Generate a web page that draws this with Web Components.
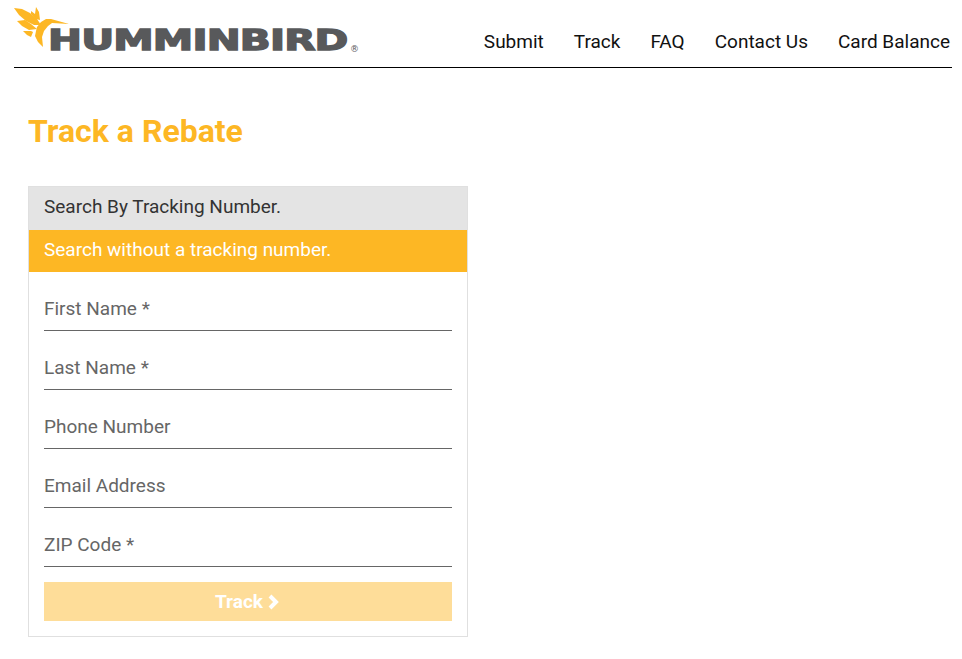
<!DOCTYPE html>
<html lang="en">
<head>
<meta charset="utf-8">
<title>Track a Rebate</title>
<style>
  html, body { margin: 0; background: #fff; }
  body { font-family: Roboto, "Liberation Sans", sans-serif; }
</style>
</head>
<body>
<hb-page>
  <hb-header slot="header">
    <hb-nav-link>Submit</hb-nav-link>
    <hb-nav-link>Track</hb-nav-link>
    <hb-nav-link>FAQ</hb-nav-link>
    <hb-nav-link>Contact Us</hb-nav-link>
    <hb-nav-link>Card Balance</hb-nav-link>
  </hb-header>
  <hb-card heading="Track a Rebate">
    <hb-tab slot="tabs">Search By Tracking Number.</hb-tab>
    <hb-tab slot="tabs" active>Search without a tracking number.</hb-tab>
    <hb-field>First Name *</hb-field>
    <hb-field>Last Name *</hb-field>
    <hb-field>Phone Number</hb-field>
    <hb-field>Email Address</hb-field>
    <hb-field>ZIP Code *</hb-field>
    <hb-button slot="footer">Track</hb-button>
  </hb-card>
</hb-page>

<script>
function shadow(el, html) {
  el.attachShadow({ mode: "open" }).innerHTML = html
}

class HbPage extends HTMLElement {
  constructor() {
    super()
    shadow(this, `
      <style>
        :host { display: block; }
        main { padding: 0 28px; }
      </style>
      <slot name="header"></slot>
      <main><slot></slot></main>
    `)
  }
}

class HbLogo extends HTMLElement {
  constructor() {
    super()
    shadow(this, `
      <style>
        :host {
          display: block;
          position: relative;
          width: 311px;
          height: 29px;
          padding-left: 34px;
          color: #58595b;
        }
        svg { position: absolute; left: 0; top: -22px; }
        .word {
          display: inline-block;
          font: 700 29px/29px "DejaVu Sans", sans-serif;
          letter-spacing: -0.6px;
          -webkit-text-stroke: 1.4px #58595b;
          transform: scaleX(1.4);
          transform-origin: left center;
          white-space: nowrap;
        }
        .mark {
          position: absolute;
          left: 336px;
          top: 18px;
          font: 9px/10px "DejaVu Sans", sans-serif;
        }
      </style>
      <svg width="56" height="44" viewBox="14 4 56 44" aria-hidden="true">
        <g fill="#fdb724">
          <path d="M14 8 L22 9 L30 13 L37 19 L41 25 L34 25 L26 21 L19 15 Z"/>
          <path d="M17 21 L25 20 L31 24 L37 29 L29 30 L22 26 Z"/>
          <path d="M23 31 L31 31 L33 32 L31 37 L27 35 Z"/>
          <path d="M36 7 L39 12 L40 20 L36 19 L31 14 L31 11 L35 14 Z"/>
          <path d="M36 31 L37 27 L41 22 L46 19 L51 19 L69 24 L52 23 L48 26 L44 31 L42 37 L43 47 L38 42 L35 36 Z"/>
        </g>
      </svg>
      <span class="word">HUMMINBIRD</span>
      <span class="mark">®</span>
    `)
  }
}

class HbHeader extends HTMLElement {
  constructor() {
    super()
    shadow(this, `
      <style>
        :host {
          display: flex;
          justify-content: space-between;
          align-items: flex-end;
          height: 67px;
          margin: 0 10px 0 14px;
          border-bottom: 1px solid #000;
        }
        hb-logo { margin-bottom: 12px; }
        nav { display: flex; gap: 30px; padding-right: 2px; margin-bottom: 14px; }
      </style>
      <hb-logo></hb-logo>
      <nav><slot></slot></nav>
    `)
  }
}

class HbNavLink extends HTMLElement {
  constructor() {
    super()
    shadow(this, `
      <style>
        :host { display: block; font-size: 19px; line-height: 22px; color: #111; cursor: pointer; }
      </style>
      <slot></slot>
    `)
  }
}

class HbCard extends HTMLElement {
  constructor() {
    super()
    shadow(this, `
      <style>
        :host { display: block; }
        h1 {
          margin: 0;
          padding: 45px 0 36px;
          font-size: 32px;
          line-height: 37px;
          font-weight: 700;
          color: #fdb724;
        }
        .box { width: 438px; border: 1px solid #e0e0e0; }
        .fields { display: flex; flex-direction: column; padding: 0 15px; }
        .footer { padding: 15px; }
      </style>
      <h1></h1>
      <div class="box">
        <slot name="tabs"></slot>
        <div class="fields"><slot></slot></div>
        <div class="footer"><slot name="footer"></slot></div>
      </div>
    `)
    this.shadowRoot.querySelector("h1").textContent = this.getAttribute("heading")
  }
}

class HbTab extends HTMLElement {
  constructor() {
    super()
    shadow(this, `
      <style>
        :host {
          display: block;
          padding: 9px 15px 12px;
          font-size: 19px;
          line-height: 22px;
          background: #e4e4e4;
          color: #333;
          cursor: pointer;
        }
        :host([active]) { background: #fdb724; color: #fff; padding-bottom: 11px; }
      </style>
      <slot></slot>
    `)
  }
}

class HbField extends HTMLElement {
  constructor() {
    super()
    shadow(this, `
      <style>
        :host { display: block; padding-top: 17px; }
        label {
          display: grid;
          height: 41px;
          border-bottom: 1px solid #666;
          font-size: 19px;
          color: #666;
        }
        span, input { grid-area: 1 / 1; }
        span { line-height: 40px; }
        input { border: 0; outline: 0; padding: 0; background: none; font: inherit; }
      </style>
      <label><span><slot></slot></span><input type="text"></label>
    `)
  }
}

class HbButton extends HTMLElement {
  constructor() {
    super()
    shadow(this, `
      <style>
        :host { display: block; }
        button {
          display: flex;
          justify-content: center;
          align-items: center;
          gap: 4px;
          width: 100%;
          height: 39px;
          border: 0;
          padding: 0;
          background: #fedd99;
          color: #fff;
          font: 700 19px Roboto, sans-serif;
        }
        svg { width: 14px; height: 18px; }
      </style>
      <button disabled>
        <slot></slot>
        <svg viewBox="0 0 14 18"><polyline points="3,3 9,9 3,15" fill="none" stroke="#fff" stroke-width="4"/></svg>
      </button>
    `)
  }
}

customElements.define("hb-page", HbPage)
customElements.define("hb-logo", HbLogo)
customElements.define("hb-header", HbHeader)
customElements.define("hb-nav-link", HbNavLink)
customElements.define("hb-card", HbCard)
customElements.define("hb-tab", HbTab)
customElements.define("hb-field", HbField)
customElements.define("hb-button", HbButton)
</script>
</body>
</html>
